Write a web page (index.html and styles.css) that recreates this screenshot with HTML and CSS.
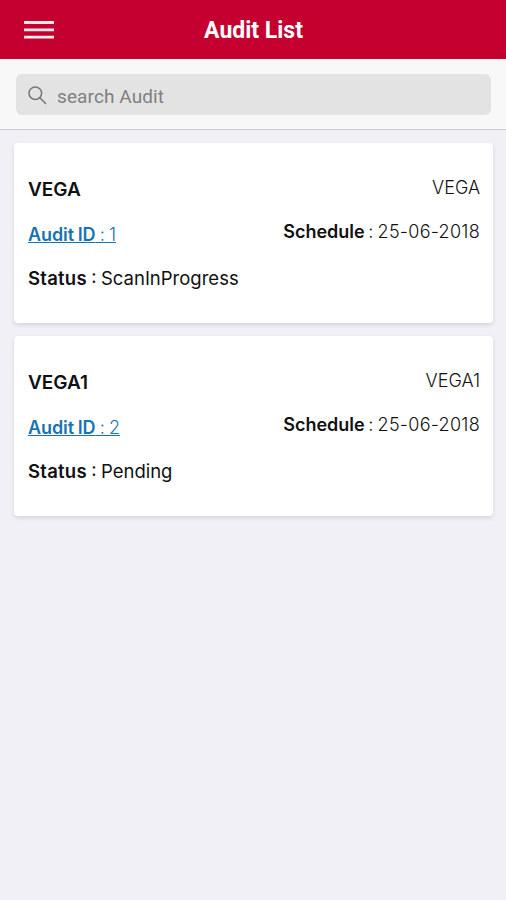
FILE: index.html
```html
<!DOCTYPE html>
<html lang="en">
<head>
<meta charset="utf-8">
<title>Audit List</title>
<link rel="stylesheet" href="styles.css">
</head>
<body>
<header class="header">
  <svg class="menu" width="30" height="20" viewBox="0 0 30 20"><path d="M0 2.5h30M0 9.8h30M0 17.1h30"/></svg>
  <h1 class="title">Audit List</h1>
</header>
<div class="toolbar">
  <div class="search">
    <svg class="glass" width="20" height="20" viewBox="0 0 20 20"><circle cx="7.3" cy="7.2" r="6.3"/><path d="M11.8 11.7l6.2 6.2"/></svg>
    <span class="placeholder">search Audit</span>
  </div>
</div>
<main class="list">
  <article class="card">
    <div class="row"><h2 class="name">VEGA</h2><span class="light">VEGA</span></div>
    <div class="row"><a class="link"><b>Audit ID</b> : 1</a><span class="light date"><b>Schedule</b> : 25-06-2018</span></div>
    <div class="row"><span class="status"><b>Status</b> : ScanInProgress</span></div>
  </article>
  <article class="card">
    <div class="row"><h2 class="name">VEGA1</h2><span class="light">VEGA1</span></div>
    <div class="row"><a class="link"><b>Audit ID</b> : 2</a><span class="light date"><b>Schedule</b> : 25-06-2018</span></div>
    <div class="row"><span class="status"><b>Status</b> : Pending</span></div>
  </article>
</main>
</body>
</html>
```

FILE: styles.css
```css
* { box-sizing: border-box; }
body { margin: 0; min-height: 900px; background: #f0f0f6; font-family: Inter, sans-serif; color: #111; }
.header { height: 59px; background: #c3002f; display: grid; grid-template-columns: 54px 1fr 53px; align-items: center; color: #fff; }
.menu { margin-left: 23.5px; fill: none; stroke: #fbe9ed; stroke-width: 2.8; }
.title { margin: 3px 0 0; text-align: center; font: 700 23px/28px Roboto, sans-serif; }
.toolbar { height: 71px; padding: 15px 15px 0 16px; background: #f8f8f8; border-bottom: 1px solid #cccdd3; }
.search { height: 41px; border-radius: 6px; background: #e3e3e3; display: flex; align-items: center; padding: 3px 11px 0 12px; gap: 9px; color: #808080; font-family: Roboto, sans-serif; font-size: 19px; letter-spacing: .1px; }
.glass { fill: none; stroke: #777; stroke-width: 1.5; }
.list { padding: 13px 13px 0 14px; display: flex; flex-direction: column; gap: 13px; }
.card { height: 180px; padding: 33px 13px 0 14px; background: #fff; border-radius: 4px; box-shadow: 0 2px 4px rgba(0,0,0,.12); display: flex; flex-direction: column; gap: 20px; }
.row { height: 25px; display: flex; justify-content: space-between; font-size: 18px; line-height: 25px; white-space: nowrap; }
.name { margin: 0; font-size: 19px; font-weight: 600; line-height: 27px; }
.row b { font-weight: 600; }
.light { margin-top: -1px; font-weight: 300; }
.date { margin-top: -2px; word-spacing: -1.5px; letter-spacing: .28px; }
.date b { letter-spacing: -.03px; }
.link { margin-top: 1px; color: #1873b0; font-weight: 300; text-decoration: underline; word-spacing: -.7px; letter-spacing: -.1px; }
.status { font-size: 18.5px; word-spacing: -.8px; }
.status b { letter-spacing: .25px; }
```
